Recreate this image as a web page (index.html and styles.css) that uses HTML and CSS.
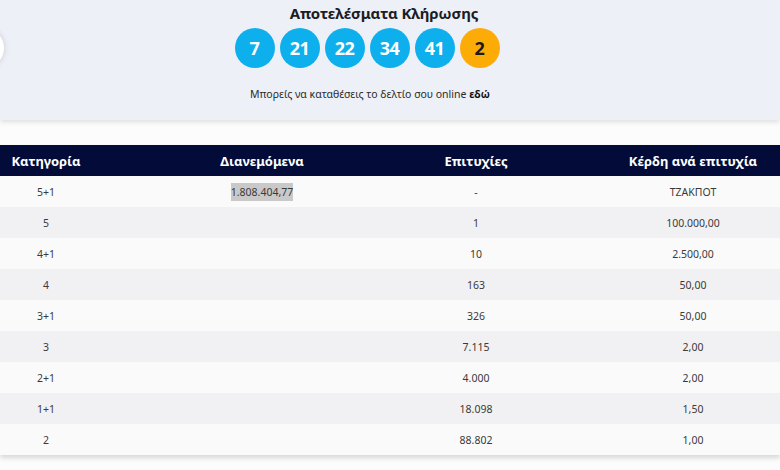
FILE: index.html
```html
<!DOCTYPE html>
<html lang="el">
<head>
<meta charset="utf-8">
<title>Αποτελέσματα Κλήρωσης</title>
<link rel="stylesheet" href="styles.css">
</head>
<body>
<section class="draw">
  <span class="nav-btn"></span>
  <h2 class="draw-title">Αποτελέσματα Κλήρωσης</h2>
  <div class="balls">
    <span class="ball">7</span>
    <span class="ball">21</span>
    <span class="ball">22</span>
    <span class="ball">34</span>
    <span class="ball">41</span>
    <span class="ball bonus">2</span>
  </div>
  <p class="online">Μπορείς να καταθέσεις το δελτίο σου online <b>εδώ</b></p>
</section>
<div class="spacer"></div>
<div class="results">
  <div class="row head">
    <div>Κατηγορία</div><div>Διανεμόμενα</div><div>Επιτυχίες</div><div class="last">Κέρδη ανά επιτυχία</div>
  </div>
  <div class="row"><div>5+1</div><div><span class="sel">1.808.404,77</span></div><div>-</div><div class="last">ΤΖΑΚΠΟΤ</div></div>
  <div class="row"><div>5</div><div></div><div>1</div><div class="last">100.000,00</div></div>
  <div class="row"><div>4+1</div><div></div><div>10</div><div class="last">2.500,00</div></div>
  <div class="row"><div>4</div><div></div><div>163</div><div class="last">50,00</div></div>
  <div class="row"><div>3+1</div><div></div><div>326</div><div class="last">50,00</div></div>
  <div class="row"><div>3</div><div></div><div>7.115</div><div class="last">2,00</div></div>
  <div class="row"><div>2+1</div><div></div><div>4.000</div><div class="last">2,00</div></div>
  <div class="row"><div>1+1</div><div></div><div>18.098</div><div class="last">1,50</div></div>
  <div class="row"><div>2</div><div></div><div>88.802</div><div class="last">1,00</div></div>
</div>
</body>
</html>
```
FILE: styles.css
```css
html, body {
  margin: 0;
  padding: 0;
  background: #fcfcfd;
  overflow: hidden;
  width: 780px;
  height: 470px;
  font-family: "Noto Sans", "DejaVu Sans", sans-serif;
  color: #333;
}
.draw {
  position: relative;
  background: #edf0f7;
  height: 120px;
  box-shadow: 0 2px 5px rgba(0,0,0,0.12);
  display: flex;
  flex-direction: column;
  align-items: center;
  overflow: hidden;
}
.nav-btn {
  position: absolute;
  left: -36px;
  top: 28px;
  width: 40px;
  height: 40px;
  border-radius: 50%;
  background: #fff;
  box-shadow: 0 0 6px rgba(0,0,0,0.15);
}
.draw-title {
  margin: 4px 0 0 -12px;
  font-size: 15px;
  line-height: 18px;
  font-weight: 700;
  color: #1c1c24;
  letter-spacing: -0.1px;
}
.balls {
  display: flex;
  gap: 5px;
  margin: 6px 0 0 -46px;
}
.ball {
  width: 40px;
  height: 40px;
  border-radius: 50%;
  background: #0db0ec;
  color: #fff;
  font-weight: 700;
  font-size: 18px;
  display: flex;
  align-items: center;
  justify-content: center;
  letter-spacing: -0.5px;
}
.ball.bonus {
  background: #fdab06;
  color: #1a1a1a;
}
.online {
  margin: 19px 0 0 -40px;
  font-size: 10.5px;
  line-height: 14px;
  color: #2a2a2a;
}
.online b {
  font-weight: 700;
  color: #111;
}
.spacer {
  height: 25px;
}
.results {
  box-shadow: 0 3px 5px rgba(0,0,0,0.15);
}
.row {
  display: grid;
  grid-template-columns: 92px 340px 88px 1fr;
  height: 31px;
  align-items: center;
  text-align: center;
  font-size: 10.5px;
  color: #3a3a3a;
}
.row .last {
  padding-left: 86px;
}
.row:nth-child(even) { background: #fafafa; }
.row:nth-child(odd) { background: #f1f1f3; }
.row.head {
  background: #030c38;
  color: #fff;
  font-size: 13px;
  font-weight: 700;
}
.sel {
  background: #c9c9c9;
  padding: 2px 0;
}
```
